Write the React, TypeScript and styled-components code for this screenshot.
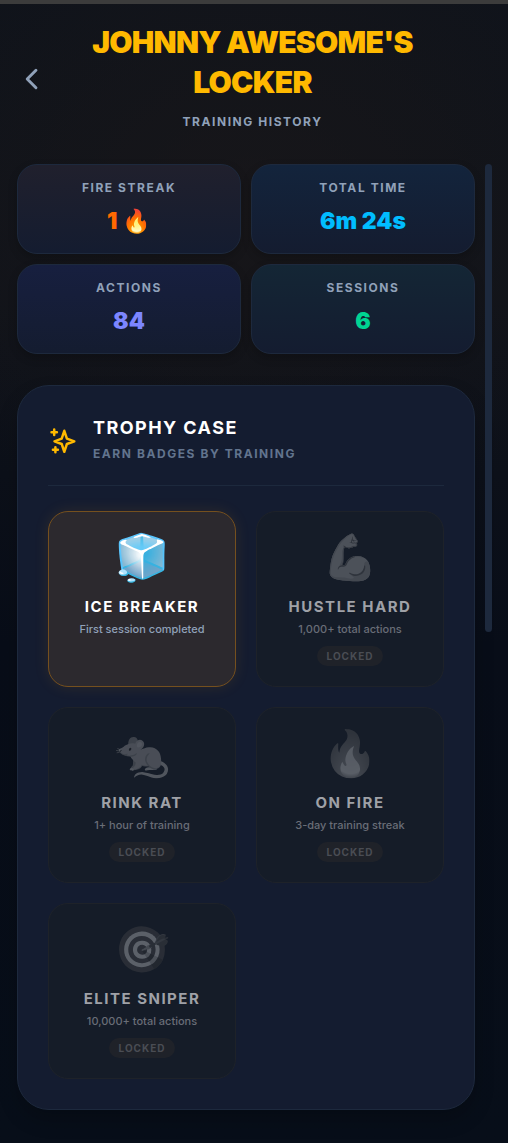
import React from "react";
import styled, { createGlobalStyle } from "styled-components";

const Global = createGlobalStyle`
  * { box-sizing: border-box; }
  html { background: #070c17; }
  body {
    margin: 0;
    font-family: Inter, "Liberation Sans", sans-serif;
    color: #fff;
  }
  h1, h2, h3, p, dl, dd, ul { margin: 0; padding: 0; }
`;

const Page = styled.div`
  min-height: 100vh;
  border-top: 4px solid #3c3c3c;
  padding: 18px 16px 33px 17px;
  background:
    radial-gradient(ellipse 80% 320px at 50% 200px, rgba(28, 24, 24, 0.6), rgba(28, 24, 24, 0) 100%),
    linear-gradient(180deg, #0f131b 0, #10131a 300px, #080d18 640px, #070e19 100%);
`;

const Header = styled.header`
  display: grid;
  grid-template-columns: 28px 1fr 32px;
  align-items: center;
  column-gap: 30px;
  margin-bottom: 28px;
`;

const BackButton = styled.button`
  display: flex;
  padding: 0;
  border: 0;
  background: none;
  color: #90a1b9;
  cursor: pointer;
`;

const HeaderText = styled.div`
  padding-bottom: 4px;
  text-align: center;
`;

const Title = styled.h1`
  font-size: 30px;
  line-height: 40px;
  font-weight: 900;
  letter-spacing: -0.025em;
  text-transform: uppercase;
  color: #ffb900;
`;

const Caption = styled.p<{ $tone?: string }>`
  font-size: 12px;
  line-height: 20px;
  font-weight: 700;
  letter-spacing: 0.13em;
  text-transform: uppercase;
  color: ${(p) => p.$tone ?? "#90a1b9"};
`;

const Subtitle = styled(Caption)`
  margin-top: 10px;
`;

const Scroller = styled.div`
  display: flex;
  align-items: flex-start;
  gap: 10px;
`;

const Content = styled.main`
  flex: 1;
  min-width: 0;
`;

const ScrollThumb = styled.div`
  width: 7px;
  height: 468px;
  border-radius: 4px;
  background: #1d293d;
`;

const Stats = styled.dl`
  display: grid;
  grid-template-columns: 1fr 1fr;
  gap: 10px;
  margin-bottom: 31px;
`;

const Stat = styled.div<{ $top: string }>`
  padding: 13px 12px 14px;
  border: 1px solid #1d293d;
  border-radius: 20px;
  background: linear-gradient(180deg, ${(p) => p.$top}, #141c30);
  box-shadow: 0 4px 10px rgba(0, 0, 0, 0.2);
  text-align: center;
`;

const StatValue = styled.dd<{ $color: string }>`
  margin-top: 5px;
  font-size: 23px;
  line-height: 36px;
  font-weight: 900;
  color: ${(p) => p.$color};
`;

const Panel = styled.section`
  padding: 30px;
  border: 1px solid #1d293d;
  border-radius: 32px;
  background: #141c30;
  box-shadow: 0 10px 20px rgba(0, 0, 0, 0.2);
`;

const PanelHeader = styled.header`
  display: flex;
  align-items: center;
  gap: 15px;
  padding-bottom: 19px;
  margin-bottom: 25px;
  border-bottom: 1px solid #1d293d;
`;

const PanelHeading = styled.div`
  display: grid;
  gap: 4px;
  padding-bottom: 2px;
`;

const PanelTitle = styled.h2`
  font-size: 18px;
  line-height: 24px;
  font-weight: 700;
  letter-spacing: 0.08em;
  text-transform: uppercase;
`;

const Badges = styled.ul`
  display: grid;
  grid-template-columns: 1fr 1fr;
  gap: 20px;
  list-style: none;
`;

const Badge = styled.li<{ $locked: boolean }>`
  display: flex;
  flex-direction: column;
  align-items: center;
  min-height: 176px;
  padding: 15px;
  border: 1px solid ${(p) => (p.$locked ? "#1e2229" : "#75501e")};
  border-radius: 20px;
  background: ${(p) => (p.$locked ? "#151c28" : "#2c292e")};
  box-shadow: ${(p) => (p.$locked ? "none" : "0 0 15px rgba(254, 154, 0, 0.1)")};
  text-align: center;
`;

const BadgeArt = styled.span<{ $locked: boolean }>`
  font-size: 45px;
  line-height: 60px;
  filter: ${(p) => (p.$locked ? "grayscale(1)" : "none")};
  opacity: ${(p) => (p.$locked ? 0.3 : 1)};
`;

const BadgeName = styled.h3<{ $locked: boolean }>`
  margin-top: 8px;
  font-size: 15px;
  line-height: 24px;
  font-weight: 700;
  letter-spacing: 0.1em;
  text-transform: uppercase;
  color: ${(p) => (p.$locked ? "#9fa1a7" : "#fff")};
`;

const BadgeText = styled.p<{ $locked: boolean }>`
  font-size: 11px;
  line-height: 20px;
  font-weight: 500;
  color: ${(p) => (p.$locked ? "#696d77" : "#90a1b9")};
`;

const Lock = styled.span`
  margin-top: 7px;
  padding: 0 10px;
  border-radius: 10px;
  font-size: 10px;
  line-height: 20px;
  font-weight: 700;
  letter-spacing: 1px;
  text-transform: uppercase;
  color: #4a4d54;
  background: #1f2229;
`;

const stats = [
  { label: "Fire Streak", value: "1 🔥", color: "#ff6900", top: "#20202d" },
  { label: "Total Time", value: "6m 24s", color: "#00bcff", top: "#13243c" },
  { label: "Actions", value: "84", color: "#7c86ff", top: "#171f3f" },
  { label: "Sessions", value: "6", color: "#00d492", top: "#142635" },
];

const badges = [
  { art: "🧊", name: "Ice Breaker", text: "First session completed", locked: false },
  { art: "💪", name: "Hustle Hard", text: "1,000+ total actions", locked: true },
  { art: "🐀", name: "Rink Rat", text: "1+ hour of training", locked: true },
  { art: "🔥", name: "On Fire", text: "3-day training streak", locked: true },
  { art: "🎯", name: "Elite Sniper", text: "10,000+ total actions", locked: true },
];

const Sparkles = () => (
  <svg width="30" height="30" viewBox="0 0 30 30" fill="none" stroke="#ffb900" strokeWidth="2.5" strokeLinecap="round" strokeLinejoin="round" aria-hidden="true">
    <path d="M16.3 4.800 18.900 12.600 26.300 15.300 18.900 18 16.300 25.800 13.700 18 6.500 15.300 13.700 12.600Z" />
    <path d="M6.200 3.500v5.400M3.500 6.200h5.400M7.400 21.300v5M4.900 23.800h5" />
  </svg>
);

export default function App() {
  return (
    <>
      <Global />
      <Page>
        <Header>
          <BackButton type="button" aria-label="Back">
            <svg width="28" height="28" viewBox="0 0 24 24" fill="none" stroke="currentColor" strokeWidth="2.5" strokeLinecap="round" strokeLinejoin="round">
              <path d="M16.250 19.500 8.750 12l7.500-7.500" />
            </svg>
          </BackButton>
          <HeaderText>
            <Title>Johnny Awesome's Locker</Title>
            <Subtitle>Training History</Subtitle>
          </HeaderText>
        </Header>
        <Scroller>
          <Content>
            <Stats>
              {stats.map((s) => (
                <Stat key={s.label} $top={s.top}>
                  <Caption as="dt">{s.label}</Caption>
                  <StatValue $color={s.color}>{s.value}</StatValue>
                </Stat>
              ))}
            </Stats>
            <Panel>
              <PanelHeader>
                <Sparkles />
                <PanelHeading>
                  <PanelTitle>Trophy Case</PanelTitle>
                  <Caption $tone="#62748e">Earn badges by training</Caption>
                </PanelHeading>
              </PanelHeader>
              <Badges>
                {badges.map((b) => (
                  <Badge key={b.name} $locked={b.locked}>
                    <BadgeArt $locked={b.locked}>{b.art}</BadgeArt>
                    <BadgeName $locked={b.locked}>{b.name}</BadgeName>
                    <BadgeText $locked={b.locked}>{b.text}</BadgeText>
                    {b.locked && <Lock>Locked</Lock>}
                  </Badge>
                ))}
              </Badges>
            </Panel>
          </Content>
          <ScrollThumb />
        </Scroller>
      </Page>
    </>
  );
}
